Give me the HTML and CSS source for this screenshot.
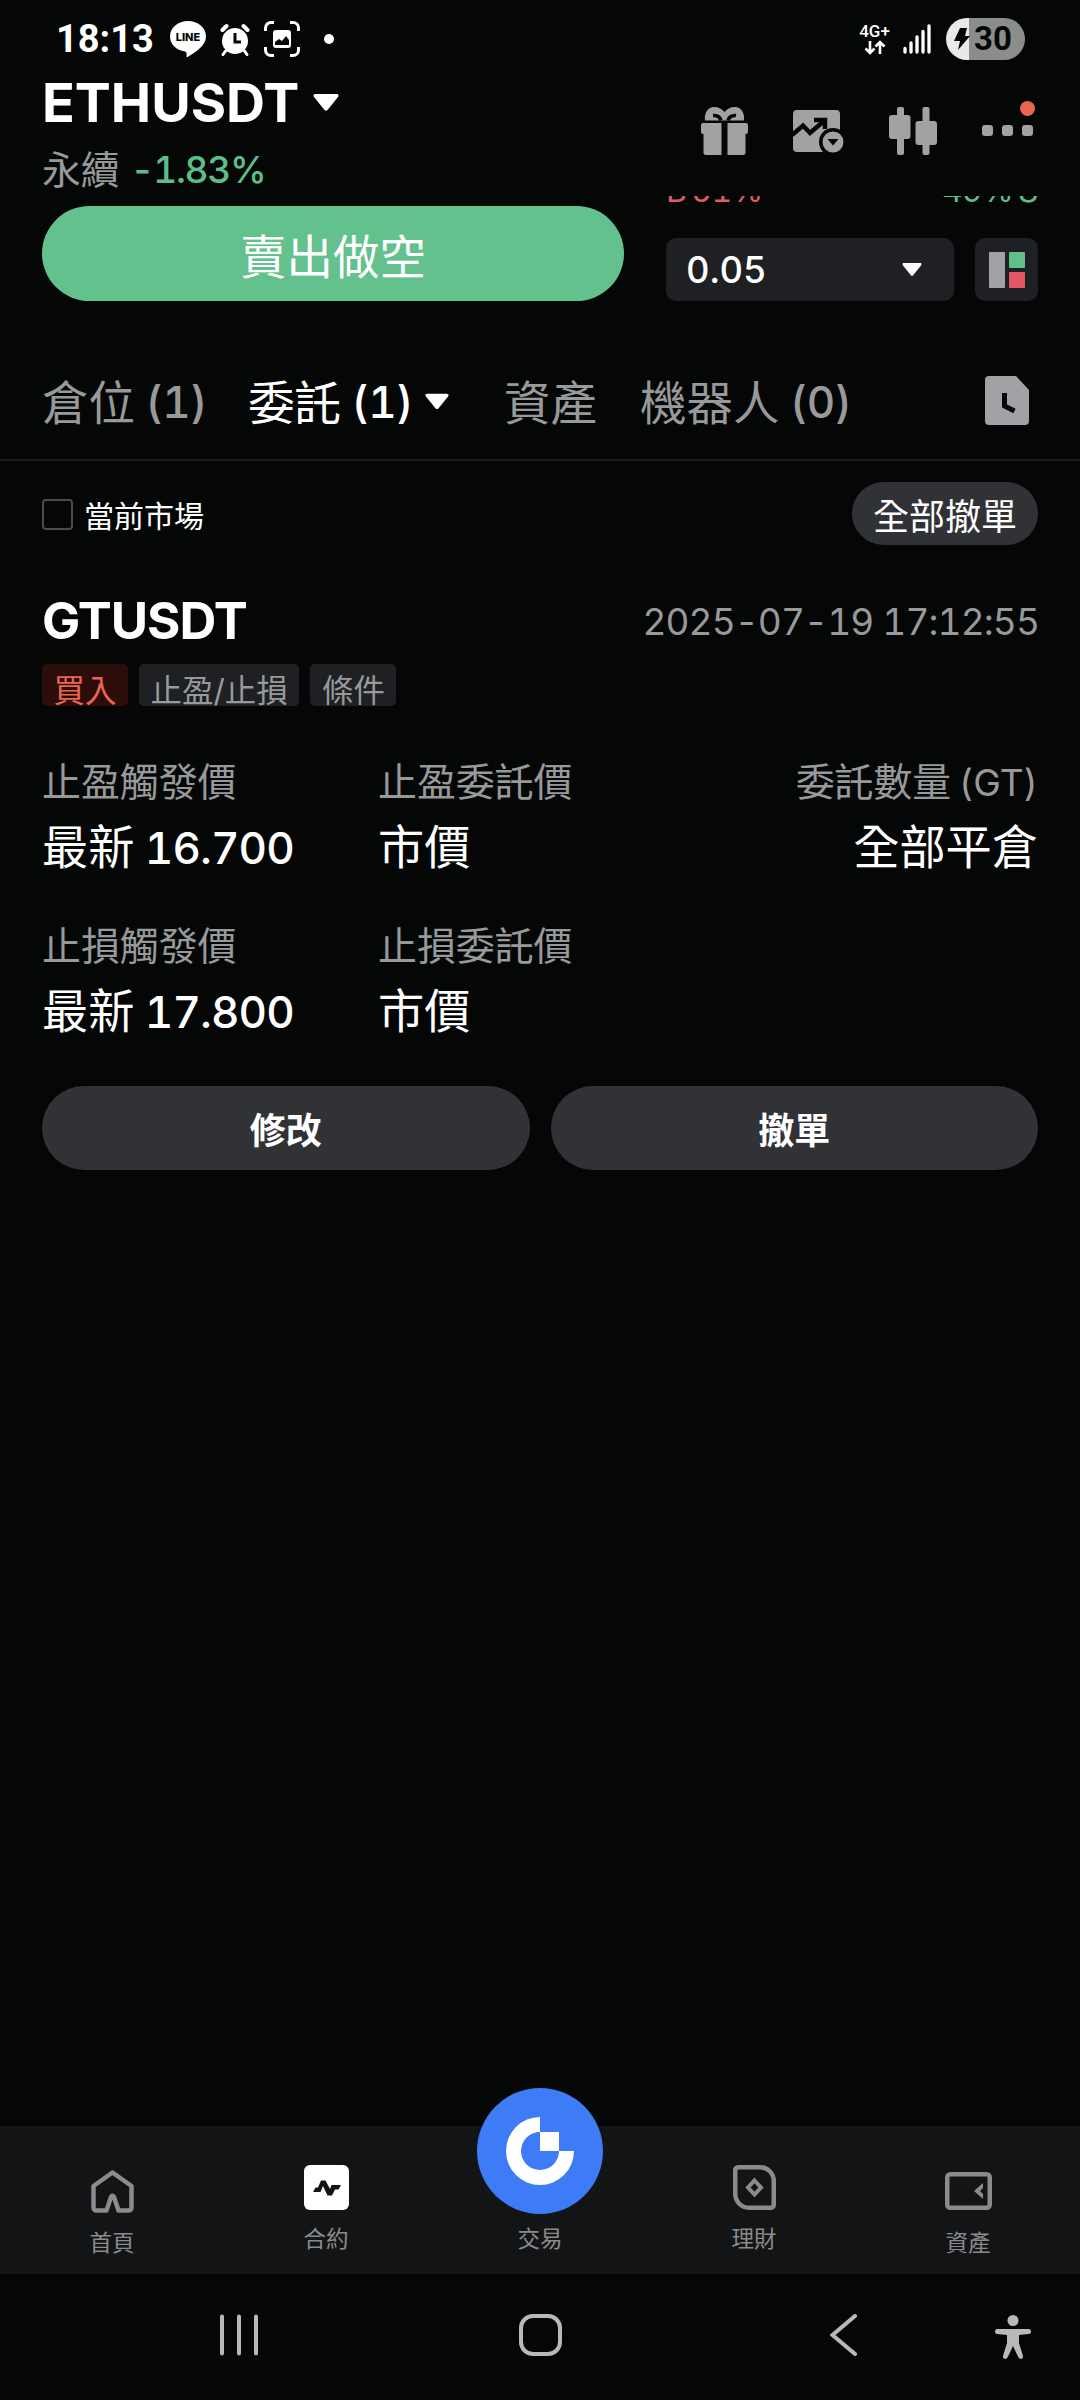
FILE: index.html
```html
<!DOCTYPE html>
<html lang="zh-Hant">
<head>
<meta charset="utf-8">
<title>ETHUSDT</title>
<link rel="stylesheet" href="styles.css">
</head>
<body>
<div class="screen">
  <div class="status">
    <span class="clock">18:13</span>
    <svg class="ic-line" width="36" height="36" viewBox="0 0 36 36"><path fill="#fff" d="M18 0C8 0 0 6.700 0 15.500c0 7.500 6 13.500 14 14.800 2.500.5 2.800 1.200 2.500 5.200 0 .6.500.7 1 .4C25 31.500 36 25 36 15.500 36 6.700 28 0 18 0z"/><text class="line-text" x="18" y="20">LINE</text></svg>
    <svg class="ic-alarm" width="30" height="33" viewBox="0 0 30 33"><circle cx="15" cy="18" r="13" fill="#fff"/><path d="M2.500 7 6.500 3M27.500 7 23.500 3" stroke="#fff" stroke-width="4" stroke-linecap="round"/><path d="M5.500 28 3 31.500M24.500 28 27 31.500" stroke="#fff" stroke-width="3" stroke-linecap="round"/><path d="M15 10v9h6" fill="none" stroke="#050706" stroke-width="3"/></svg>
    <svg class="ic-shot" width="36" height="36" viewBox="0 0 36 36"><path d="M1.500 10V7a5.500 5.500 0 0 1 5.500-5.500h3M26 1.500h3A5.500 5.500 0 0 1 34.500 7v3M34.500 26v3a5.500 5.500 0 0 1-5.500 5.500h-3M10 34.500H7A5.500 5.500 0 0 1 1.500 29v-3" fill="none" stroke="#fff" stroke-width="3"/><rect x="9" y="9" width="18" height="18" rx="3" fill="#fff"/><path d="M11 24v-3l4-3 3 2 4-5 3 4v5z" fill="#050706"/></svg>
    <i class="dot"></i>
    <div class="net"><span>4G+</span><svg width="22" height="15" viewBox="0 0 22 15"><path d="M6 1v12M1.500 8.500 6 13l4.500-4.500M16 14V2M11.500 6.500 16 2l4.500 4.500" fill="none" stroke="#fff" stroke-width="2.600"/></svg></div>
    <svg class="ic-signal" width="28" height="30" viewBox="0 0 28 30"><path d="M2 24.500V28M8 19v9M14 13v15M20 7.500V28M26 2v26" stroke="#fff" stroke-width="3.300" stroke-linecap="round"/></svg>
    <div class="battery"><svg width="16" height="22" viewBox="0 0 16 22"><path d="M6 0h7l-2 8h5L4 22l2-9H0z" fill="#050706"/></svg><span>30</span></div>
  </div>

  <header class="header">
    <div class="pair">
      <div class="pair-name">ETHUSDT<svg width="26" height="17" viewBox="0 0 26 17"><path d="M2.500 0h21c2 0 2.500 1.500 1.500 3L14.500 16q-1.500 1.500-3 0L1 3C0 1.500.5 0 2.500 0z" fill="#fff"/></svg></div>
      <div class="pair-sub"><span>永續</span><b>-1.83%</b></div>
    </div>
    <div class="tools">
      <svg class="t-gift" width="47" height="48" viewBox="0 0 47 48"><path fill="#a1a2a4" d="M4 13.500C3 6 7 0 13 0c5 0 8 2 10.500 5C26 2 29 0 34 0c6 0 10 6 9 13.500zM2 16h18.500v32H5a2.500 2.500 0 0 1-2.500-2.500V27H2a2 2 0 0 1-2-2v-7a2 2 0 0 1 2-2zM26.500 16H45a2 2 0 0 1 2 2v7a2 2 0 0 1-2 2h-.5v18.500A2.500 2.500 0 0 1 42 48H26.500z"/><path d="M12 8.500c5-.5 7 1.500 8 5M35 8.500c-5-.5-7 1.500-8 5" fill="none" stroke="#050706" stroke-width="3.500"/></svg>
      <svg class="t-chart" width="51" height="43" viewBox="0 0 51 43"><rect width="47" height="42" rx="4" fill="#a1a2a4"/><path d="M-1 25 10 15.500l7 7.500L31 11M21 10h11v9" fill="none" stroke="#050706" stroke-width="4.500"/><circle cx="40" cy="32" r="14" fill="#050706"/><circle cx="40" cy="32" r="10.500" fill="#a1a2a4"/><path d="M34.500 29h11L40 35.500z" fill="#050706"/></svg>
      <svg class="t-candle" width="48" height="48" viewBox="0 0 48 48"><g fill="#a1a2a4"><rect x="8" width="7" height="48" rx="2"/><rect y="8" width="21.500" height="24" rx="3"/><rect x="33.500" width="7" height="48" rx="2"/><rect x="26.500" y="14" width="21.500" height="24" rx="3"/></g></svg>
      <div class="more"><i></i><i></i><i></i><span class="badge"></span></div>
    </div>
  </header>

  <section class="trade">
    <button class="sell">賣出做空</button>
    <div class="book">
      <div class="ratio"><span class="red">B 51%</span><span class="green">49% S</span></div>
      <div class="book-row">
        <div class="select"><span>0.05</span><svg width="20" height="13" viewBox="0 0 26 17"><path d="M2.500 0h21c2 0 2.500 1.500 1.500 3L14.500 16q-1.500 1.500-3 0L1 3C0 1.500.5 0 2.500 0z" fill="#fff"/></svg></div>
        <div class="depth"><svg width="36" height="36" viewBox="0 0 36 36"><rect width="16" height="36" rx="1" fill="#a1a2a6"/><rect x="20" width="16" height="16" rx="1" fill="#5fc08c"/><rect x="20" y="20" width="16" height="16" rx="1" fill="#e55665"/></svg></div>
      </div>
    </div>
  </section>

  <nav class="tabs">
    <span class="tab t1">倉位 <b>(1)</b></span>
    <span class="tab t2 on">委託 <b>(1)</b><svg width="24" height="17" viewBox="0 0 26 17"><path d="M2.500 0h21c2 0 2.500 1.500 1.500 3L14.500 16q-1.500 1.500-3 0L1 3C0 1.500.5 0 2.500 0z" fill="#fff"/></svg></span>
    <span class="tab t3">資產</span>
    <span class="tab t4">機器人 <b>(0)</b></span>
    <svg class="history" width="44" height="49" viewBox="0 0 44 49"><path d="M4 0h27l13 14v31a4 4 0 0 1-4 4H4a4 4 0 0 1-4-4V4a4 4 0 0 1 4-4z" fill="#a1a2a5"/><path d="M19.500 17v13l10 5" fill="none" stroke="#050706" stroke-width="5"/></svg>
  </nav>

  <div class="filter">
    <i class="check"></i><span>當前市場</span><button class="cancel-all">全部撤單</button>
  </div>

  <article class="order">
    <div class="order-head"><h2>GTUSDT</h2><time>2025-07-19 17:12:55</time></div>
    <div class="tags"><span class="tag buy">買入</span><span class="tag">止盈/止損</span><span class="tag">條件</span></div>
    <div class="grid">
      <div class="cell"><label>止盈觸發價</label><p>最新 <b>16.700</b></p></div>
      <div class="cell"><label>止盈委託價</label><p>市價</p></div>
      <div class="cell end"><label>委託數量 <em>(GT)</em></label><p>全部平倉</p></div>
      <div class="cell"><label>止損觸發價</label><p>最新 <b>17.800</b></p></div>
      <div class="cell"><label>止損委託價</label><p>市價</p></div>
    </div>
    <div class="actions"><button>修改</button><button>撤單</button></div>
  </article>

  <nav class="bottom">
    <div class="item low"><svg width="43" height="43" viewBox="0 0 43 43"><path d="M6 40.500h9.500L20 27q1.500-2.500 3 0l4.500 13.500H37q3.500 0 3.500-3.500V16L21.500 2.500 2.500 16v21q0 3.500 3.500 3.500z" fill="none" stroke="#8b8b8e" stroke-width="4.500" stroke-linejoin="round"/></svg><span>首頁</span></div>
    <div class="item"><svg width="45" height="45" viewBox="0 0 45 45"><rect width="45" height="45" rx="6" fill="#fff"/><path d="M9 27l2.500-4.500H14L17 15.500h4.500L26 24l1.500-4H37l-2.500 4.500h-3.500L28 30.500h-4.500L19 21l-2.500 6z" fill="#131416"/></svg><span>合約</span></div>
    <div class="item mid"><svg width="126" height="126" viewBox="0 0 126 126"><circle cx="63" cy="63" r="63" fill="#3e7bf6"/><path d="M63 29a34 34 0 1 0 34 34H82a19 19 0 1 1-19-19z" fill="#fff"/><rect x="63" y="44" width="19" height="19" fill="#fff"/></svg><span>交易</span></div>
    <div class="item"><svg width="43" height="45" viewBox="0 0 43 45"><path d="M5 2.250h22A13.700 13.700 0 0 1 40.750 16v24a2.700 2.700 0 0 1-2.700 2.750H16A13.700 13.700 0 0 1 2.250 29V5A2.700 2.700 0 0 1 5 2.250z" fill="none" stroke="#8b8b8e" stroke-width="4.500"/><path d="M21.500 15.500 28 22.500l-6.500 7-6.500-7z" fill="none" stroke="#8b8b8e" stroke-width="4"/></svg><span>理財</span></div>
    <div class="item low wallet"><svg width="47" height="38" viewBox="0 0 47 38"><rect x="2.250" y="2.250" width="42.500" height="33.500" rx="3" fill="none" stroke="#8b8b8e" stroke-width="4.500"/><path d="M38 11v5l-3 3 3 3v5l-9-8z" fill="#8b8b8e"/></svg><span>資產</span></div>
  </nav>

  <footer class="sys">
    <svg class="s1" width="38" height="42" viewBox="0 0 38 42"><path d="M2 2.500v37M19 2.500v37M36 2.500v37" stroke="#b9b9b9" stroke-width="4" stroke-linecap="round"/></svg>
    <svg class="s2" width="43" height="42" viewBox="0 0 43 42"><rect x="2" y="2" width="39" height="38" rx="12" fill="none" stroke="#b9b9b9" stroke-width="4"/></svg>
    <svg class="s3" width="27" height="42" viewBox="0 0 27 42"><path d="M25 2 2.500 21 25 40" fill="none" stroke="#b9b9b9" stroke-width="4" stroke-linecap="round"/></svg>
    <svg class="s4" width="36" height="44" viewBox="0 0 36 44"><g fill="#b9b9b9"><circle cx="18" cy="5.500" r="5.500"/><path d="M2.500 14h31a2.500 2.500 0 0 1 0 5L24 20v8l4 13c.5 3-3 4-4.500 1.500L18 31l-5.500 11.500C11 45 7.500 44 8 41l4-13v-8l-9.500-1a2.500 2.500 0 0 1 0-5z"/></g></svg>
  </footer>
</div>
</body>
</html>
```
FILE: styles.css
```css
* { box-sizing: border-box; margin: 0; padding: 0; }
body { background: #050706; color: #fff; font-family: Inter, "Noto Sans CJK TC", sans-serif; font-variant-numeric: tabular-nums; }
svg { display: block; flex: none; }
button { border: 0; color: #fff; font: inherit; }
b { font-weight: 500; }
em { font-style: normal; font-size: 37px; margin-left: -3px; }
.screen { width: 1080px; height: 2400px; display: flex; flex-direction: column; overflow: hidden; }

.status { height: 70px; display: flex; align-items: center; padding: 8px 55px 0 56px; }
.clock { width: 114px; font: 700 38px/60px Roboto, sans-serif; }
.line-text { font: 800 11px Inter, sans-serif; text-anchor: middle; fill: #050706; }
.ic-alarm { margin-left: 14px; }
.ic-shot { margin-left: 14px; }
.dot { width: 10px; height: 10px; border-radius: 50%; background: #fff; margin-left: 24px; }
.net { margin-left: auto; width: 31px; display: flex; flex-direction: column; align-items: center; gap: 1px; }
.net span { font: 500 17px/15px Roboto, sans-serif; white-space: nowrap; }
.ic-signal { margin: 0 15px 0 13px; }
.battery { width: 79px; height: 42px; border-radius: 21px; background: linear-gradient(90deg, #e8e9e8 23px, #8b8d8b 23px); display: flex; align-items: center; padding-left: 8px; color: #050706; font: 700 33px/42px Roboto, sans-serif; }
.battery span { margin-left: 4px; }

.header { height: 126px; display: flex; justify-content: space-between; padding: 0 41px 0 42px; }
.pair-name { display: flex; align-items: center; gap: 14px; height: 64px; font-weight: 700; font-size: 54px; }
.pair-sub { display: flex; align-items: center; gap: 11px; height: 68px; color: #98999b; font-size: 38.800px; }
.pair-sub span { margin-top: -2px; }
.pair-sub b { color: #5cbf8a; font-size: 37px; margin-top: 3px; letter-spacing: -1.300px; }
.tools { display: flex; padding-top: 37px; }
.t-chart { margin: 3px 0 0 45px; }
.t-candle { margin-left: 45px; }
.more { position: relative; display: flex; gap: 9px; margin: 18px 6px 0 45px; height: 11px; }
.more i { width: 11px; height: 11px; border-radius: 3px; background: #a1a2a4; }
.badge { position: absolute; left: 38px; top: -24px; width: 15px; height: 15px; border-radius: 50%; background: #e96654; }

.trade { height: 105px; display: flex; justify-content: space-between; padding: 0 42px; }
.sell { width: 582px; height: 95px; margin-top: 10px; border-radius: 48px; background: #63c18e; font-size: 46.500px; }
.book { width: 372px; }
.ratio { height: 42px; overflow: hidden; display: flex; justify-content: space-between; font-size: 32px; line-height: 40px; }
.ratio span { margin-top: -25px; word-spacing: -3px; letter-spacing: -0.6px; }
.red { color: #dd5c69; }
.green { color: #5cbf8a; }
.book-row { display: flex; justify-content: space-between; }
.select { width: 288px; height: 63px; border-radius: 10px; background: #1f2024; display: flex; align-items: center; justify-content: space-between; padding: 0 32px 0 20px; font-size: 36.500px; font-weight: 500; }
.depth { width: 63px; height: 63px; border-radius: 10px; background: #1f2024; display: grid; place-items: center; }

.tabs { height: 160px; border-bottom: 2px solid #1b1c1d; display: flex; align-items: center; padding: 42px 51px 0 42px; font-size: 46.500px; color: #98999b; }
.tab { display: flex; align-items: center; white-space: pre; margin-top: -3px; }
.tab b { font-size: 44px; margin: 5px 0 0 -2px; letter-spacing: -0.5px; }
.on { color: #fff; }
.t1 { width: 206px; } .t2 { width: 256px; } .t3 { width: 136px; }
.tab svg { margin: 4px 0 0 12px; }
.history { margin-left: auto; margin-top: -1px; }

.filter { height: 104px; display: flex; align-items: center; padding: 2px 42px 0; font-size: 30px; }
.check { width: 31px; height: 31px; border: 2px solid #4b4b4d; border-radius: 4px; margin-right: 11px; }
.cancel-all { margin-left: auto; width: 186px; height: 63px; margin-top: -1px; border-radius: 32px; background: #313236; font-size: 36px; }

.order { flex: 1; padding: 18px 42px 0; }
.order-head { display: flex; justify-content: space-between; align-items: center; height: 78px; }
h2 { font-size: 51px; font-weight: 650; letter-spacing: -1px; margin-top: -3px; }
time { font-size: 37px; letter-spacing: -0.900px; margin: -2px -1px 0 0; color: #98999b; }
.tags { display: flex; gap: 11px; margin-top: 3px; }
.tag { height: 42px; border-radius: 5px; background: #1f2024; color: #98999b; padding: 0 11.500px; font-size: 31.500px; line-height: 53px; overflow: hidden; white-space: nowrap; }
.buy { background: #2c0d0a; color: #ea6553; }
.grid { display: grid; grid-template-columns: 336px 334px 1fr; row-gap: 36px; margin-top: 45px; }
.cell { height: 128px; white-space: nowrap; }
.cell label { display: block; height: 62px; line-height: 62px; font-size: 38.900px; color: #98999b; }
.cell p { height: 66px; line-height: 68px; font-size: 46.200px; }
.cell b { font-size: 44px; margin-left: -2px; letter-spacing: -0.900px; }
.end { text-align: right; }
.actions { display: flex; gap: 21px; margin-top: 43px; }
.actions button { flex: 1; height: 84px; border-radius: 42px; background: #313236; font-size: 36px; font-weight: 700; }

.bottom { height: 148px; background: #131416; display: flex; padding: 0 5px; }
.item { width: 214px; display: flex; flex-direction: column; align-items: center; padding-top: 39px; font-size: 22.500px; line-height: 30px; color: #8b8b8e; }
.item span { margin-top: 14px; }
.low { padding-top: 44px; }
.low span { margin-top: 15px; }
.wallet { padding-top: 46px; }
.wallet span { margin-top: 18px; }
.mid { padding-top: 0; }
.mid svg { margin-top: -38px; }
.mid span { margin-top: 10px; }

.sys { height: 126px; display: flex; align-items: flex-start; padding: 40px 49px 0 220px; }
.s2 { margin-left: 261px; }
.s3 { margin-left: 268px; }
.s4 { margin-left: auto; margin-top: 1px; }
```
